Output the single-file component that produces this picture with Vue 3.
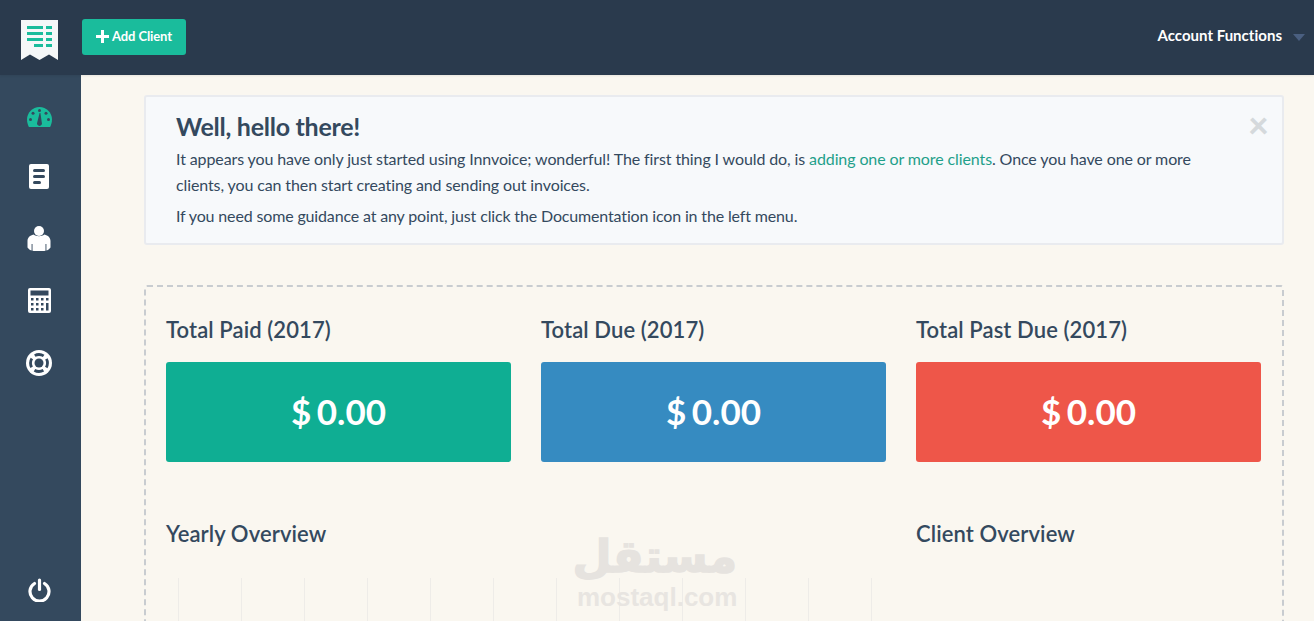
<script setup>
const cards = [
  { title: 'Total Paid (2017)', cls: 'green' },
  { title: 'Total Due (2017)', cls: 'blue' },
  { title: 'Total Past Due (2017)', cls: 'red' },
]
const gridLines = 12
</script>

<template>
  <div class="app">
    <header class="topbar">
      <div class="logo">
        <svg width="37" height="40" viewBox="0 0 37 40">
          <path d="M0 0H37V40L28 34.500L18.500 40L9 34.500L0 40Z" fill="#f5f7f8" />
          <g fill="#1abc9c">
            <rect x="6" y="6" width="16" height="3" />
            <rect x="25" y="6" width="6" height="3" />
            <rect x="6" y="12" width="16" height="3" />
            <rect x="25" y="12" width="6" height="3" />
            <rect x="6" y="18" width="16" height="3" />
            <rect x="25" y="18" width="6" height="3" />
            <rect x="13" y="24" width="9" height="3" />
            <rect x="25" y="24" width="6" height="3" />
          </g>
        </svg>
      </div>
      <button class="add-btn">
        <svg width="13" height="13" viewBox="0 0 13 13"><path d="M5 0H8V5H13V8H8V13H5V8H0V5H5Z" fill="#fff" /></svg>
        <span>Add Client</span>
      </button>
      <div class="account">
        <span>Account Functions</span>
        <i class="caret"></i>
      </div>
    </header>

    <div class="body">
      <nav class="sidebar">
        <div class="nav-top">
          <svg class="gauge" width="25" height="20" viewBox="0 0 25 20">
            <path fill="#1abc9c" d="M12.500 0C5.600 0 0 5.600 0 12.500C0 15 .7 17.700 1.900 20H23.100C24.300 17.700 25 15 25 12.500C25 5.600 19.400 0 12.500 0Z" />
            <g fill="#34495e">
              <circle cx="12.500" cy="3.600" r="1.500" />
              <circle cx="6" cy="6.200" r="1.500" />
              <circle cx="19" cy="6.200" r="1.500" />
              <circle cx="3.500" cy="12.500" r="1.500" />
              <circle cx="21.500" cy="12.500" r="1.500" />
              <path d="M13.400 6L14.800 15.500A2.500 2.500 0 1 1 10.200 15.500L12.600 6Z" />
            </g>
          </svg>
          <svg width="20" height="25" viewBox="0 0 20 25">
            <rect width="20" height="25" rx="2" fill="#fff" />
            <g fill="#34495e">
              <rect x="4" y="5" width="12" height="3" rx="1.500" />
              <rect x="4" y="11" width="12" height="3" rx="1.500" />
              <rect x="4" y="17" width="8" height="3" rx="1.500" />
            </g>
          </svg>
          <svg width="24" height="25" viewBox="0 0 24 25">
            <circle cx="12" cy="5" r="5" fill="#fff" />
            <path fill="#fff" d="M6.500 8.500C3 9.500 .5 11.500 .5 15V21.500C2 23.500 3.500 24.300 4.600 24.500V18H5.500V24.700C9 25.100 15 25.100 18.500 24.700V18H19.400V24.500C20.500 24.300 22 23.500 23.500 21.500V15C23.500 11.500 21 9.500 17.500 8.500C14.500 10.800 9.500 10.800 6.500 8.500Z" />
          </svg>
          <svg width="23" height="25" viewBox="0 0 23 25">
            <rect width="23" height="25" rx="2" fill="#fff" />
            <rect x="2.500" y="2.500" width="18" height="5" fill="#34495e" />
            <g fill="#34495e">
              <rect x="3" y="10" width="2.500" height="2.500" /><rect x="8" y="10" width="2.500" height="2.500" /><rect x="13" y="10" width="2.500" height="2.500" /><rect x="18" y="10" width="2.500" height="2.500" />
              <rect x="3" y="15" width="2.500" height="2.500" /><rect x="8" y="15" width="2.500" height="2.500" /><rect x="13" y="15" width="2.500" height="2.500" /><rect x="18" y="15" width="2.500" height="7.500" />
              <rect x="3" y="20" width="2.500" height="2.500" /><rect x="8" y="20" width="2.500" height="2.500" /><rect x="13" y="20" width="2.500" height="2.500" />
            </g>
          </svg>
          <svg width="26" height="26" viewBox="0 0 26 26">
            <circle cx="13" cy="13" r="13" fill="#fff" />
            <circle cx="13" cy="13" r="4.500" fill="#34495e" />
            <circle cx="13" cy="13" r="8.500" fill="none" stroke="#34495e" stroke-width="2.800" stroke-dasharray="9.350 4" stroke-dashoffset="4.675" />
          </svg>
        </div>
        <svg class="power" width="23" height="24" viewBox="0 0 23 24">
          <path d="M6.500 5.500A9.500 9.500 0 1 0 16.500 5.500" fill="none" stroke="#fff" stroke-width="3.200" stroke-linecap="round" />
          <path d="M11.500 2V11.500" fill="none" stroke="#fff" stroke-width="3.200" stroke-linecap="round" />
        </svg>
      </nav>

      <main class="main">
        <section class="alert">
          <span class="close">×</span>
          <h2>Well, hello there!</h2>
          <p class="first">It appears you have only just started using Innvoice; wonderful! The first thing I would do, is <a>adding one or more clients</a>. Once you have one or more clients, you can then start creating and sending out invoices.</p>
          <p class="last">If you need some guidance at any point, just click the Documentation icon in the left menu.</p>
        </section>

        <section class="panel">
          <div class="cards">
            <div v-for="c in cards" :key="c.title" class="card">
              <h3>{{ c.title }}</h3>
              <div class="amount" :class="c.cls">$ 0.00</div>
            </div>
          </div>
          <div class="overview">
            <div class="yearly">
              <h3>Yearly Overview</h3>
              <div class="chart">
                <i v-for="n in gridLines" :key="n"></i>
              </div>
            </div>
            <div class="client">
              <h3>Client Overview</h3>
            </div>
          </div>
        </section>
      </main>
    </div>

    <div class="watermark">
      <div class="wm-ar" lang="ar" dir="rtl">مستقل</div>
      <div class="wm-en">mostaql.com</div>
    </div>
  </div>
</template>

<style>
html, body { margin: 0; overflow: hidden; }
</style>

<style scoped>
.app {
  position: relative;
  width: 1314px;
  height: 621px;
  overflow: hidden;
  display: flex;
  flex-direction: column;
  font-family: Lato, "Liberation Sans", sans-serif;
  color: #34495e;
  background: #faf7f0;
}
.topbar {
  flex: 0 0 75px;
  display: flex;
  align-items: center;
  background: #2a3a4d;
  box-sizing: border-box;
  padding-right: 9px;
  box-shadow: 0 1px 2px rgba(0, 0, 0, 0.08);
  z-index: 1;
}
.logo {
  width: 81px;
  height: 75px;
  display: flex;
  justify-content: flex-start;
  box-sizing: border-box;
  padding: 20px 0 0 21px;
}
.add-btn {
  width: 104px;
  height: 36px;
  margin-top: -1px;
  margin-left: 1px;
  border: 0;
  border-radius: 3px;
  background: #1abc9c;
  color: #fff;
  font: 700 13px Lato, sans-serif;
  letter-spacing: -0.1px;
  display: flex;
  align-items: center;
  justify-content: center;
  gap: 3px;
  padding: 0 0 2px;
}
.account {
  margin-left: auto;
  margin-top: -6px;
  display: flex;
  align-items: center;
  gap: 11px;
  color: #fff;
  font-size: 15px;
  font-weight: 700;
  letter-spacing: 0.02px;
}
.caret {
  width: 0;
  height: 0;
  margin-top: 6px;
  border-left: 6px solid transparent;
  border-right: 6px solid transparent;
  border-top: 7px solid #4a5f80;
}
.body {
  flex: 1;
  min-height: 0;
  display: flex;
}
.sidebar {
  flex: 0 0 81px;
  background: #34495e;
  display: flex;
  flex-direction: column;
  align-items: center;
  justify-content: space-between;
  box-sizing: border-box;
  padding: 32px 3px 19px 0;
}
.nav-top {
  display: flex;
  flex-direction: column;
  align-items: center;
  gap: 37px;
}
.main {
  flex: 1;
  min-width: 0;
  box-sizing: border-box;
  padding: 20px 30px 0 63px;
}
.alert {
  position: relative;
  height: 150px;
  box-sizing: border-box;
  background: #f7f9fb;
  border: 2px solid #e9ebef;
  border-radius: 3px;
  padding: 14px 60px 0 30px;
  font-size: 16px;
  line-height: 26px;
}
.alert h2 {
  margin: 0;
  font-size: 25px;
  line-height: 30px;
  font-weight: 700;
  letter-spacing: -0.27px;
}
.alert p {
  margin: 5px 0 0;
  letter-spacing: -0.11px;
}
.alert p.first {
  margin-top: 5px;
}
.alert p.last {
  letter-spacing: -0.15px;
}
.alert a {
  color: #1fa08a;
}
.close {
  position: absolute;
  top: 9px;
  right: 13px;
  font-size: 36px;
  line-height: 36px;
  font-weight: 900;
  color: #d5d9dc;
}
.panel {
  margin-top: 40px;
  height: 400px;
  box-sizing: border-box;
  border: 2px dashed #c8ccd0;
  border-radius: 3px;
  padding: 28px 21px 0 20px;
}
.cards, .overview {
  display: grid;
  grid-template-columns: repeat(3, 345px);
  column-gap: 30px;
}
h3 {
  margin: 0;
  font-size: 22px;
  line-height: 30px;
  font-weight: 600;
  letter-spacing: 0.1px;
}
.amount {
  margin-top: 17px;
  height: 100px;
  border-radius: 3px;
  color: #fff;
  font-size: 35px;
  font-weight: 700;
  word-spacing: -3px;
  line-height: 98px;
  text-align: center;
}
.green { background: #0fae93; }
.blue { background: #368bc1; }
.red { background: #ee5649; }
.overview {
  margin-top: 57px;
}
.yearly {
  grid-column: span 2;
}
.client {
  grid-column: 3;
}
.chart {
  margin: 29px 0 0 12px;
  height: 80px;
  display: flex;
}
.chart i {
  flex: 0 0 63px;
  box-sizing: border-box;
  border-left: 1px solid #eeece8;
}
.watermark {
  position: absolute;
  left: 577px;
  top: 530px;
  width: 160px;
  text-align: center;
  pointer-events: none;
}
.wm-ar {
  font-family: "DejaVu Sans", sans-serif;
  font-size: 45px;
  font-weight: 700;
  line-height: 54px;
  color: #e6e3df;
  -webkit-text-stroke: 1.5px #e6e3df;
}
.wm-en {
  font-family: "Liberation Sans", sans-serif;
  font-size: 26px;
  font-weight: 700;
  line-height: 26px;
  color: #e8e5e1;
}
</style>
